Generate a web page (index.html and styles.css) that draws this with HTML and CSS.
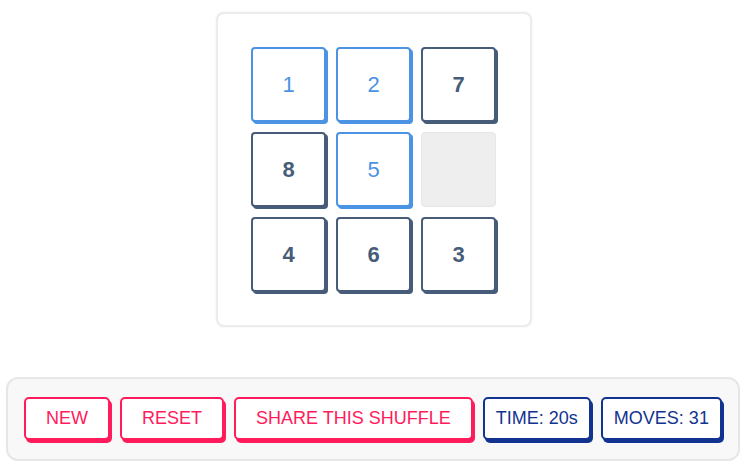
FILE: index.html
```html
<!DOCTYPE html>
<html lang="en">
<head>
    <meta charset="UTF-8">
    <title>Sliding Puzzle</title>
    <link rel="stylesheet" href="styles.css">
</head>
<body>

    <div class="board">
        <div class="grid">
            <div class="tile placed">1</div>
            <div class="tile placed">2</div>
            <div class="tile">7</div>
            <div class="tile">8</div>
            <div class="tile placed">5</div>
            <div class="tile empty"></div>
            <div class="tile">4</div>
            <div class="tile">6</div>
            <div class="tile">3</div>
        </div>
    </div>

    <div class="controls">
        <button class="btn action">NEW</button>
        <button class="btn action">RESET</button>
        <button class="btn action">SHARE THIS SHUFFLE</button>
        <div class="btn stat">TIME: 20s</div>
        <div class="btn stat">MOVES: 31</div>
    </div>

</body>
</html>
```

FILE: styles.css
```css
body {
    display: flex;
    flex-direction: column;
    align-items: center;
    margin: 0;
    font-family: "Liberation Sans", Arial, sans-serif;
    background: #fff;
}

.board {
    box-sizing: border-box;
    width: 316px;
    height: 315px;
    margin-top: 12px;
    padding: 33px;
    border: 2px solid #ececec;
    border-radius: 8px;
    box-shadow: 0 0 2px rgba(0, 0, 0, 0.08);
    background: #fff;
}

.grid {
    display: grid;
    grid-template-columns: repeat(3, 75px);
    grid-template-rows: repeat(3, 75px);
    gap: 10px;
}

.tile {
    box-sizing: border-box;
    display: flex;
    align-items: center;
    justify-content: center;
    border: 2px solid #475c78;
    border-radius: 4px;
    box-shadow: 2px 2px 0 #475c78;
    color: #475c78;
    font-size: 22px;
    font-weight: bold;
    background: #fff;
}

.tile.placed {
    border-color: #4b93e3;
    box-shadow: 2px 2px 0 #4b93e3;
    color: #4b93e3;
    font-weight: normal;
}

.tile.empty {
    border: 1px solid #e6e6e6;
    box-shadow: none;
    background: #eeeeee;
}

.controls {
    box-sizing: border-box;
    display: flex;
    justify-content: center;
    gap: 10px;
    width: 734px;
    margin-top: 50px;
    margin-left: -2px;
    padding: 18px 8px 19px 8px;
    border: 2px solid #e6e6e6;
    border-radius: 12px;
    background: #f8f8f8;
}

.btn {
    box-sizing: border-box;
    flex-shrink: 0;
    height: 43px;
    padding: 0 20px;
    display: flex;
    align-items: center;
    white-space: nowrap;
    border: 2px solid;
    border-radius: 5px;
    background: #fff;
    font-family: "Liberation Sans", Arial, sans-serif;
    font-size: 18px;
}

.action {
    color: #ff1b5c;
    border-color: #ff1b5c;
    box-shadow: 2px 3px 0 #ff1b5c;
}

.stat {
    color: #12338f;
    border-color: #12338f;
    box-shadow: 2px 3px 0 #12338f;
    padding: 0 11px;
}
```
